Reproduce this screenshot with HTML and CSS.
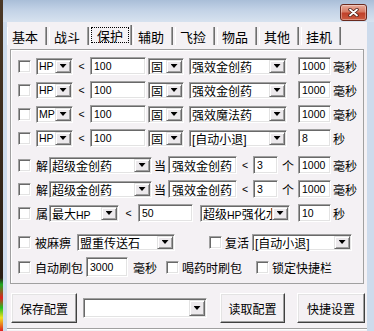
FILE: index.html
```html
<!DOCTYPE html>
<html lang="zh-CN">

<head>
    <meta charset="UTF-8">
    <meta name="viewport" content="width=device-width, initial-scale=1.0">
    <title>保护</title>
    <link rel="stylesheet" href="styles.css">
</head>

<body>
    <div class="window">
        <div class="titlebar">
            <div class="close-btn">
                <svg width="11" height="9" viewBox="0 0 11 9">
                    <path d="M2 1.5 L9 7.5 M9 1.5 L2 7.5" stroke="#4a1d15" stroke-width="3.4" stroke-linecap="round" />
                    <path d="M2 1.5 L9 7.5 M9 1.5 L2 7.5" stroke="#fff" stroke-width="1.8" stroke-linecap="round" />
                </svg>
            </div>
        </div>

        <div class="client">
            <ul class="tabs">
                <li>基本</li>
                <li>战斗</li>
                <li class="active"><span>保护</span></li>
                <li>辅助</li>
                <li>飞捡</li>
                <li>物品</li>
                <li>其他</li>
                <li>挂机</li>
            </ul>

            <div class="panel">
                <!-- hp / mp thresholds -->
                <div class="row">
                    <input type="checkbox" class="check">
                    <div class="combo stat"><span class="text lat">HP</span><span class="drop"></span></div>
                    <span class="lt lat">&lt;</span>
                    <input type="text" class="edit num amount" value="100">
                    <div class="combo mode"><span class="text">固</span><span class="drop"></span></div>
                    <div class="combo item"><span class="text">强效金创药</span><span class="drop"></span></div>
                    <input type="text" class="edit num ms" value="1000">
                    <span class="unit">毫秒</span>
                </div>
                <div class="row">
                    <input type="checkbox" class="check">
                    <div class="combo stat"><span class="text lat">HP</span><span class="drop"></span></div>
                    <span class="lt lat">&lt;</span>
                    <input type="text" class="edit num amount" value="100">
                    <div class="combo mode"><span class="text">固</span><span class="drop"></span></div>
                    <div class="combo item"><span class="text">强效金创药</span><span class="drop"></span></div>
                    <input type="text" class="edit num ms" value="1000">
                    <span class="unit">毫秒</span>
                </div>
                <div class="row">
                    <input type="checkbox" class="check">
                    <div class="combo stat"><span class="text lat">MP</span><span class="drop"></span></div>
                    <span class="lt lat">&lt;</span>
                    <input type="text" class="edit num amount" value="100">
                    <div class="combo mode"><span class="text">固</span><span class="drop"></span></div>
                    <div class="combo item"><span class="text">强效魔法药</span><span class="drop"></span></div>
                    <input type="text" class="edit num ms" value="1000">
                    <span class="unit">毫秒</span>
                </div>
                <div class="row">
                    <input type="checkbox" class="check">
                    <div class="combo stat"><span class="text lat">HP</span><span class="drop"></span></div>
                    <span class="lt lat">&lt;</span>
                    <input type="text" class="edit num amount" value="100">
                    <div class="combo mode"><span class="text">固</span><span class="drop"></span></div>
                    <div class="combo item"><span class="text">[自动小退]</span><span class="drop"></span></div>
                    <input type="text" class="edit num ms" value="8">
                    <span class="unit">秒</span>
                </div>

                <!-- unpack -->
                <div class="row gap-top">
                    <input type="checkbox" class="check">
                    <span class="tag first">解</span>
                    <div class="combo use"><span class="text">超级金创药</span><span class="drop"></span></div>
                    <span class="tag near">当</span>
                    <input type="text" class="edit target" value="强效金创药">
                    <span class="lt narrow lat">&lt;</span>
                    <input type="text" class="edit num count" value="3">
                    <span class="tag pcs">个</span>
                    <input type="text" class="edit num ms" value="1000">
                    <span class="unit">毫秒</span>
                </div>
                <div class="row">
                    <input type="checkbox" class="check">
                    <span class="tag first">解</span>
                    <div class="combo use"><span class="text">超级金创药</span><span class="drop"></span></div>
                    <span class="tag near">当</span>
                    <input type="text" class="edit target" value="强效金创药">
                    <span class="lt narrow lat">&lt;</span>
                    <input type="text" class="edit num count" value="3">
                    <span class="tag pcs">个</span>
                    <input type="text" class="edit num ms" value="1000">
                    <span class="unit">毫秒</span>
                </div>
                <div class="row">
                    <input type="checkbox" class="check">
                    <span class="tag first">属</span>
                    <div class="combo attr"><span class="text">最大<span class="lat">HP</span></span><span class="drop"></span></div>
                    <span class="lt wide lat">&lt;</span>
                    <input type="text" class="edit num attr-val" value="50">
                    <div class="combo potion"><span class="text">超级<span class="lat">HP</span>强化水</span><span class="drop"></span></div>
                    <input type="text" class="edit num ms" value="10">
                    <span class="unit">秒</span>
                </div>

                <!-- misc -->
                <div class="row gap-top2">
                    <input type="checkbox" class="check">
                    <span class="tag lead">被麻痹</span>
                    <div class="combo scroll"><span class="text">盟重传送石</span><span class="drop"></span></div>
                    <input type="checkbox" class="check revive-check">
                    <span class="tag after">复活</span>
                    <div class="combo revive"><span class="text">[自动小退]</span><span class="drop"></span></div>
                </div>
                <div class="row gap-top3">
                    <input type="checkbox" class="check">
                    <span class="tag lead">自动刷包</span>
                    <input type="text" class="edit num bag" value="3000">
                    <span class="tag bag-unit">毫秒</span>
                    <input type="checkbox" class="check drink-check">
                    <span class="tag after">喝药时刷包</span>
                    <input type="checkbox" class="check lock-check">
                    <span class="tag after">锁定快捷栏</span>
                </div>
            </div>

            <div class="footer">
                <button class="btn save">保存配置</button>
                <div class="combo profile"><span class="text"></span><span class="drop"></span></div>
                <button class="btn load">读取配置</button>
                <button class="btn hotkey">快捷设置</button>
            </div>
            <div class="status"></div>
        </div>
    </div>
</body>

</html>
```

FILE: styles.css
```css
* {
    box-sizing: border-box;
}

html,
body {
    margin: 0;
    height: 100%;
    overflow: hidden;
}

body {
    background: linear-gradient(#4b3826, #2a1e14 84%, #1faa1f 86%, #e02020 90%, #20c020 93%, #f0e020 96%, #e02020);
    font: 12px "Liberation Sans", "Noto Sans CJK SC", sans-serif;
    color: #000;
}

.lat {
    font-size: 10.5px;
}

.window {
    margin-left: 3px;
    height: 331px;
    display: flex;
    flex-direction: column;
    background: #cddbec;
}

.titlebar {
    flex: none;
    height: 22px;
    display: flex;
    justify-content: flex-end;
    padding: 4px 7px 0 0;
    background: linear-gradient(#a9bed8, #c2d2e6 45%, #d7e2ef);
}

.close-btn {
    width: 27px;
    height: 17px;
    display: flex;
    align-items: center;
    justify-content: center;
    border: 1px solid #6a2a1e;
    border-radius: 3px;
    background: linear-gradient(#e8ad9c, #d77a63 45%, #c0412a 55%, #cc5b40);
    box-shadow: inset 0 0 0 1px rgba(255, 255, 255, .35);
}

.client {
    flex: 1;
    margin: 0 7px 0 4px;
    background: #f4f1f4;
}

/* tabs */
.tabs {
    display: flex;
    align-items: flex-end;
    height: 20px;
    margin: 3px 0 0;
    padding: 0;
    list-style: none;
}

.tabs li {
    width: 40px;
    height: 18px;
    margin-right: 2px;
    padding-right: 4px;
    display: flex;
    align-items: center;
    justify-content: center;
    font-size: 13px;
    border-left: 1px solid #fff;
    border-right: 1px solid #6f6f6f;
    box-shadow: inset -1px 0 #a0a0a0;
}

.tabs li.active {
    width: 42px;
    height: 20px;
    margin: 0 1px 0 -1px;
    padding-right: 2px;
}

.tabs li.active span {
    width: 38px;
    height: 16px;
    display: flex;
    align-items: center;
    justify-content: center;
    border: 1px dotted #000;
}

/* panel */
.panel {
    height: 235px;
    margin: 4px 3px 0;
    padding-top: 4px;
    border: 1px solid #a0a0a0;
    box-shadow: inset 1px 1px #fff;
}

.row {
    display: flex;
    align-items: center;
    height: 24px;
    padding-left: 7px;
}

.row.gap-top {
    margin-top: 3px;
}

.row.gap-top2 {
    margin-top: 5px;
}

.row.gap-top3 {
    margin-top: 1px;
}

.check {
    appearance: none;
    flex: none;
    width: 13px;
    height: 13px;
    margin: 0;
    background: #fff;
    border: 1px solid;
    border-color: #a0a0a0 #fff #fff #a0a0a0;
    box-shadow: inset 1px 1px #696969, inset -1px -1px #e3e3e3;
}

.combo {
    flex: none;
    display: flex;
    align-items: center;
    height: 17px;
    padding: 1px 1px 1px 2px;
    background: #fff;
    border: 1px solid;
    border-color: #a0a0a0 #fff #fff #a0a0a0;
    box-shadow: inset 1px 1px #696969, inset -1px -1px #e3e3e3;
}

.combo .text {
    flex: 1;
    overflow: hidden;
    white-space: nowrap;
}

.combo .text .lat {
    font-size: 10.5px;
}

.drop {
    flex: none;
    align-self: stretch;
    width: 16px;
    display: flex;
    align-items: center;
    justify-content: center;
    background: #ece9ec;
    border: 1px solid;
    border-color: #e3e3e3 #696969 #696969 #e3e3e3;
    box-shadow: inset 1px 1px #fff, inset -1px -1px #a0a0a0;
}

.drop::after {
    content: "";
    width: 7px;
    height: 4px;
    background: #000;
    clip-path: polygon(0 0, 100% 0, 50% 100%);
}

.edit {
    flex: none;
    height: 18px;
    padding: 0 2px 0 3px;
    background: #fff;
    border: 1px solid;
    border-color: #a0a0a0 #fff #fff #a0a0a0;
    box-shadow: inset 1px 1px #696969, inset -1px -1px #e3e3e3;
    font: 12px "Liberation Sans", "Noto Sans CJK SC", sans-serif;
    color: #000;
    outline: none;
}

.edit.num {
    font-size: 10.5px;
}

.lt {
    flex: none;
    width: 17px;
    text-align: center;
}

.lt.narrow {
    width: 16px;
}

.lt.wide {
    width: 19px;
}

.tag {
    flex: none;
    white-space: nowrap;
}

.unit {
    flex: none;
    width: 30px;
    margin-left: 2px;
}

/* column widths */
.stat { width: 37px; margin-left: 5px; }
.amount { width: 56px; }
.mode { width: 36px; margin-left: 2px; }
.item { width: 98px; margin-left: 5px; }
.ms { width: 33px; margin-left: auto; }

.tag.first { margin-left: 5px; }
.use { width: 103px; margin-left: 1px; }
.tag.near { margin-left: 2px; }
.target { width: 69px; margin-left: 2px; }
.count { width: 25px; }
.tag.pcs { margin-left: 4px; }

.attr { width: 70px; margin-left: 1px; }
.attr-val { width: 55px; }
.potion { width: 90px; margin-left: 7px; }

.tag.lead { margin-left: 4px; }
.tag.after { margin-left: 3px; }
.scroll { width: 98px; margin-left: 6px; }
.revive-check { margin-left: 34px; }
.revive { width: 100px; margin-left: 3px; }

.bag { width: 42px; height: 20px; margin-left: 3px; }
.tag.bag-unit { margin-left: 5px; }
.drink-check { margin-left: 9px; }
.lock-check { margin-left: 14px; }

/* bottom bar */
.footer {
    display: flex;
    align-items: center;
    height: 30px;
    margin-top: 9px;
    padding-left: 4px;
}

.btn {
    flex: none;
    height: 30px;
    padding: 0;
    background: #f4f1f4;
    border: 1px solid;
    border-color: #fff #404040 #404040 #fff;
    box-shadow: inset -1px -1px #a0a0a0, inset 1px 1px #e3e3e3;
    font: 12px "Liberation Sans", "Noto Sans CJK SC", sans-serif;
    color: #000;
}

.btn.save { width: 66px; }
.profile { width: 124px; height: 20px; margin-left: 6px; }
.btn.load { width: 65px; margin-left: 13px; }
.btn.hotkey { width: 68px; margin-left: 12px; }

.status {
    margin-top: 5px;
    height: 3px;
    border-top: 1px solid #a0a0a0;
    box-shadow: inset 0 1px #fff;
}
```
